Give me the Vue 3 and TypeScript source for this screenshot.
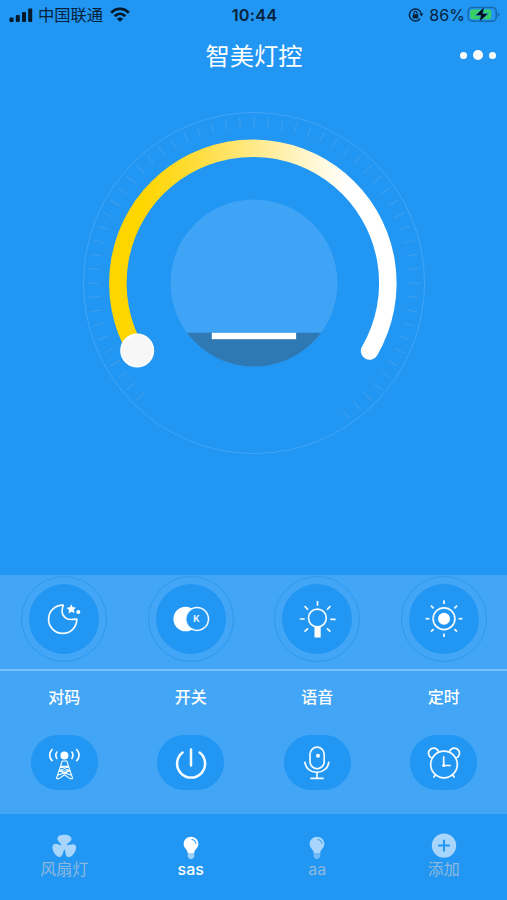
<script setup lang="ts">
interface Tab {
  label: string
  icon: 'fan' | 'bulb' | 'plus'
  active?: boolean
}

const modes: string[] = ['moon', 'color', 'lamp', 'sun']
const actions: { label: string; icon: string }[] = [
  { label: '对码', icon: 'antenna' },
  { label: '开关', icon: 'power' },
  { label: '语音', icon: 'mic' },
  { label: '定时', icon: 'clock' },
]
const tabs: Tab[] = [
  { label: '风扇灯', icon: 'fan' },
  { label: 'sas', icon: 'bulb', active: true },
  { label: 'aa', icon: 'bulb' },
  { label: '添加', icon: 'plus' },
]

// Ticks run clockwise from lower left to lower right, one every five degrees.
const ticks: number[] = Array.from({ length: 57 }, (_, i) => 135 + i * 5)
const rays: number[] = Array.from({ length: 8 }, (_, i) => i * 45)
</script>

<template>
  <div class="app">
    <header class="status">
      <div class="carrier">
        <svg class="signal" width="24" height="16" viewBox="0 0 24 16">
          <rect x="0.5" y="10.5" width="4" height="4.5" rx="1" />
          <rect x="6.8" y="8" width="4" height="7" rx="1" />
          <rect x="13" y="5" width="4" height="10" rx="1" />
          <rect x="19.2" y="1.5" width="4" height="13.5" rx="1" />
        </svg>
        <span class="carrier-name">中国联通</span>
        <svg class="wifi" width="20" height="16" viewBox="0 0 20 16">
          <path d="M1.2 5.8C6.1 0.6 13.9 0.6 18.8 5.8M4.7 9.2C7.8 6.1 12.2 6.1 15.3 9.2" />
          <path class="wifi-dot" d="M10 14.8L6.8 11.7C8.6 10.1 11.4 10.1 13.2 11.7Z" />
        </svg>
      </div>
      <span class="time">10:44</span>
      <div class="power-info">
        <svg class="lock" width="16" height="14" viewBox="0 0 16 14">
          <path d="M13.2 5.4A6 6 0 1 0 12.2 10.6" />
          <path class="solid" d="M11.2 5.6H15.4L13.5 8.6Z" />
          <rect class="solid" x="4.7" y="6.2" width="5.6" height="4.2" rx=".5" />
          <path class="shackle" d="M5.9 6.2V5a1.6 1.6 0 0 1 3.2 0V6.2" />
        </svg>
        <span class="percent">86%</span>
        <svg class="battery" width="33" height="18" viewBox="0 0 33 18">
          <rect class="shell" x="1.2" y="1.4" width="28" height="13.8" rx="4" />
          <rect class="charge" x="3.2" y="3.4" width="21" height="9.8" rx="2.2" />
          <path class="nub" d="M30.6 6Q32.5 7 32.5 8.5T30.6 11Z" />
          <path class="bolt" d="M17.5 0.6L8.3 9.6H13.8L11.8 16.5L21.4 7.4H15.8Z" />
        </svg>
      </div>
    </header>

    <div class="titlebar">
      <h1>智美灯控</h1>
      <div class="more"><i></i><i class="big"></i><i></i></div>
    </div>

    <main class="dial">
      <svg width="350" height="350" viewBox="-175 -175 350 350">
        <defs>
          <linearGradient id="arc" gradientUnits="userSpaceOnUse" x1="-112" y1="0" x2="94" y2="0">
            <stop offset="0" stop-color="#ffd500" />
            <stop offset=".25" stop-color="#ffdc38" />
            <stop offset=".55" stop-color="#ffea8a" />
            <stop offset="1" stop-color="#ffffff" />
          </linearGradient>
          <clipPath id="below"><rect x="-90" y="49.8" width="180" height="40" /></clipPath>
        </defs>
        <circle class="orbit" r="170.5" />
        <line v-for="t in ticks" :key="t" class="tick" x1="155" x2="166" :transform="`rotate(${t})`" />
        <circle class="core" r="83.5" />
        <circle class="shade" r="83.5" clip-path="url(#below)" />
        <rect x="-42.2" y="49.8" width="84.3" height="6.4" fill="#fff" />
        <path class="arc" d="M-117.9 68A135 135 0 1 1 115.6 68" />
        <circle class="knob" cx="-116.8" cy="67.4" r="16.2" />
      </svg>
    </main>

    <section class="panel">
      <div class="modes">
        <div v-for="m in modes" :key="m" class="cell">
          <div class="ring">
            <div class="disc">
              <svg class="glyph" width="44" height="44" viewBox="-22 -22 44 44">
                <template v-if="m === 'moon'">
                  <path d="M-.7-13.8A14.1 14.1 0 1 0 12.8.2C8.5 0 5.5 1.8 1.6-1.2C-2.6-4.4-2-7.5-1.8-9Q-1.6-11.5-.7-13.8Z" />
                  <path class="fill" d="M7.3-14.7L8.8-11.8L12-11.5L9.8-9.2L10.5-5.9L7.5-7.3L4.6-5.6L5-9L2.5-11.2L5.8-11.8Z" />
                  <circle class="fill" cx="14.3" cy="-7" r="2" />
                </template>
                <template v-else-if="m === 'color'">
                  <circle class="fill" cx="-5.3" r="12.3" />
                  <circle class="cover" cx="6.1" r="11.4" />
                  <text x="5.6" y="3.3">K</text>
                </template>
                <template v-else-if="m === 'lamp'">
                  <circle cx=".4" cy="-1" r="8.9" />
                  <rect class="fill" x="-2.5" y="7.5" width="6.2" height="11" />
                  <path d="M.5-18V-13.2M-17.2 0H-12.3M13.3.3H18.6M-12.4-12.8L-9-9.4M13.4-12.8L10-9.4M-12.4 12.7L-9 9.3M13.4 12.7L10 9.3" />
                </template>
                <template v-else>
                  <circle class="fill" cy="-.3" r="6" />
                  <circle cy="-.3" r="10.9" />
                  <line v-for="r in rays" :key="r" x1="14.7" x2="18.4" :transform="`translate(0 -.3) rotate(${r})`" />
                </template>
              </svg>
            </div>
          </div>
        </div>
      </div>
      <div class="actions">
        <div v-for="a in actions" :key="a.label" class="action">
          <span>{{ a.label }}</span>
          <div class="pill">
            <svg class="glyph" width="44" height="44" viewBox="-22 -22 44 44">
              <template v-if="a.icon === 'antenna'">
                <circle class="fill" cx=".4" cy="-7.6" r="4" />
                <path d="M-6.7-11.5Q-9.8-7.8-6.7-4M7.5-11.5Q10.6-7.8 7.5-4M-11.5-14Q-17.2-7.8-11.5-1.8M12.3-14Q18-7.8 12.3-1.8" />
                <path class="lattice" d="M-7.6 15.6L-1.8-2H2.8L8.7 15.6M-7.6 15.6H-5L.5 11.8L6 15.6H8.7M-3.5 3.3H4.5M-5 8H6M-3.5 3.3L6 8L-6.5 12.2M4.5 3.3L-5 8L7.5 12.2" />
              </template>
              <path v-else-if="a.icon === 'power'" class="thick" d="M-8.4-10.5A14 14 0 1 0 8.6-10.5M0-13.4V2.5" />
              <template v-else-if="a.icon === 'mic'">
                <rect x="-7" y="-15.8" width="14.2" height="21.6" rx="7.1" />
                <circle class="fill" cx="1" cy="-7.3" r="2" />
                <path d="M-12.2-1.4C-11 13 10.5 13 11.9-1.4M0 9.6V15.4M-6.7 15.4H6.7" />
              </template>
              <template v-else>
                <circle cy="1.5" r="13.3" />
                <path d="M-12.4-5A5.2 5.2 0 1 1-5.2-10.9M12.4-5A5.2 5.2 0 1 0 5.2-10.9M-.3-6.8V2.5H6.8M-8.7 12L-10.5 14.6M8.7 12L10.5 14.6" />
                <circle class="fill" cx="-.2" cy="2.5" r="1.6" />
              </template>
            </svg>
          </div>
        </div>
      </div>
    </section>

    <nav class="tabs">
      <div v-for="t in tabs" :key="t.label" class="tab" :class="{ active: t.active }">
        <svg width="26" height="26" viewBox="-13 -13 26 26">
          <template v-if="t.icon === 'fan'">
            <g transform="translate(.3 .6)">
              <path v-for="r in [0, 120, 240]" :key="r" :transform="`rotate(${r})`" d="M-2.2.8C-1.8-3-6.8-4.5-6.9-8.2C-6.6-11.6-1-12.4 2.8-11.6C6.6-10.8 8-8.4 6.7-6C5.3-3.4 2-3.8 2.2.8Z" />
            </g>
          </template>
          <template v-else-if="t.icon === 'bulb'">
            <path d="M-3.3 7C-3.3 3.8-7.4 2.3-7.4-2.2A7.4 7.1 0 0 1 7.4-2.2C7.4 2.3 3.3 3.8 3.3 7Z" />
            <path class="base" d="M-3.3 7H3.3V10.5L1.4 13H-1.4L-3.3 10.5Z" />
            <path class="shine" d="M.5-6.6Q4.5-6.2 5.1-2" />
          </template>
          <template v-else>
            <circle cx="0" cy="-.4" r="12.2" />
            <path class="cross" d="M0-6.2V5.4M-5.8-.4H5.8" />
          </template>
        </svg>
        <span>{{ t.label }}</span>
      </div>
    </nav>
  </div>
</template>

<style>
body {
  background: #2196f3;
}
</style>

<style scoped>
.app {
  width: 507px;
  height: 900px;
  display: flex;
  flex-direction: column;
  overflow: hidden;
  background: #2196f3;
  color: #fff;
  font-family: Inter, "Noto Sans CJK SC", sans-serif;
}
svg {
  display: block;
  flex: none;
}
.status {
  height: 30px;
  display: grid;
  grid-template-columns: 1fr auto 1fr;
  align-items: center;
  padding: 0 7px 0 9px;
  color: #06213b;
  font-size: 16px;
  line-height: 20px;
}
.carrier,
.power-info {
  display: flex;
  align-items: center;
}
.signal {
  fill: #04182b;
}
.carrier-name {
  margin-left: 5px;
  font-size: 16.3px;
}
.wifi {
  margin-left: 7px;
  fill: none;
  stroke: #04182b;
  stroke-width: 2.8;
}
.wifi .wifi-dot {
  fill: #04182b;
  stroke: none;
}
.time {
  font-weight: 600;
  font-size: 16.3px;
  letter-spacing: 0.2px;
}
.power-info {
  justify-content: flex-end;
}
.lock {
  fill: none;
  stroke: #06213b;
  stroke-width: 1.4;
}
.lock .solid {
  fill: #06213b;
  stroke: none;
}
.lock .shackle {
  stroke-width: 1.1;
}
.percent {
  margin: 0 2px 0 5px;
  letter-spacing: 0.1px;
}
.shell {
  fill: none;
  stroke: #1769ab;
  stroke-width: 1.5;
}
.charge {
  fill: #38cf65;
}
.nub {
  fill: #1769ab;
}
.bolt {
  fill: #020d16;
  stroke: #2196f3;
  stroke-width: 0.7;
}
.titlebar {
  height: 50px;
  display: grid;
  grid-template-columns: 1fr auto 1fr;
  align-items: center;
  padding: 0 11px 0 12px;
}
h1 {
  grid-column: 2;
  margin: 0;
  padding-top: 1px;
  font-size: 24.3px;
  line-height: 36px;
  font-weight: 400;
}
.more {
  display: flex;
  justify-content: flex-end;
  align-items: center;
  gap: 6px;
}
.more i {
  width: 7px;
  height: 7px;
  border-radius: 50%;
  background: #fff;
}
.more .big {
  width: 10px;
  height: 10px;
}
.dial {
  height: 467px;
  padding: 28px 0 0 79px;
}
.orbit {
  fill: none;
  stroke: #42a5f5;
  stroke-width: 1;
}
.tick {
  stroke: #429fea;
  stroke-width: 1;
}
.core {
  fill: #3fa3f6;
}
.shade {
  fill: #2e78b4;
}
.arc {
  fill: none;
  stroke: url(#arc);
  stroke-width: 17.5;
  stroke-linecap: round;
}
.knob {
  fill: #f7f7f7;
  stroke: #fff;
  stroke-width: 1.6;
}
.panel {
  flex: none;
  height: 239px;
  background: #42a5f5;
}
.modes {
  height: 94px;
  display: grid;
  grid-template-columns: repeat(4, 1fr);
  padding-left: 1px;
  border-bottom: 2px solid #79c0fa;
}
.cell {
  display: flex;
  justify-content: center;
  padding-top: 1px;
}
.ring {
  width: 84px;
  height: 84px;
  display: flex;
  align-items: center;
  justify-content: center;
  border: 1px solid #2e98ef;
  border-radius: 50%;
}
.disc {
  width: 70px;
  height: 70px;
  display: flex;
  align-items: center;
  justify-content: center;
  border-radius: 50%;
  background: #2196f3;
}
.glyph {
  fill: none;
  stroke: #f4fbff;
  stroke-width: 1.7;
  stroke-linejoin: round;
}
.glyph .fill {
  fill: #fff;
  stroke: none;
}
.glyph .cover {
  fill: #2196f3;
  stroke-width: 1.5;
}
.glyph .thick {
  stroke-width: 2.5;
  stroke-linecap: round;
}
.glyph .lattice {
  stroke-width: 1.15;
}
.glyph text {
  fill: #e9f6ff;
  stroke: none;
  font-size: 9px;
  font-weight: 700;
  text-anchor: middle;
}
.actions {
  display: grid;
  grid-template-columns: repeat(4, 1fr);
  padding: 14px 0 0 1px;
}
.action {
  display: flex;
  flex-direction: column;
  align-items: center;
  gap: 26px;
  font-size: 16px;
  font-weight: 500;
  line-height: 24px;
}
.pill {
  width: 67px;
  height: 55px;
  display: flex;
  align-items: center;
  justify-content: center;
  border-radius: 27px;
  background: #2196f3;
}
.tabs {
  flex: 1;
  display: grid;
  grid-template-columns: repeat(4, 1fr);
  padding: 19px 0 0 1px;
}
.tab {
  display: flex;
  flex-direction: column;
  align-items: center;
  font-size: 16px;
  line-height: 21px;
  color: #8fb9dc;
}
.tab.active {
  color: #fff;
  font-weight: 500;
}
.tab svg {
  fill: #a8d5fb;
}
.tab.active svg {
  fill: #fff;
}
.tab .base {
  fill: #70baf7;
}
.tab.active .base {
  fill: #9dd0fb;
}
.shine {
  fill: none;
  stroke: #56adf5;
  stroke-width: 1.2;
}
.cross {
  stroke: #2196f3;
  stroke-width: 2;
}
</style>
